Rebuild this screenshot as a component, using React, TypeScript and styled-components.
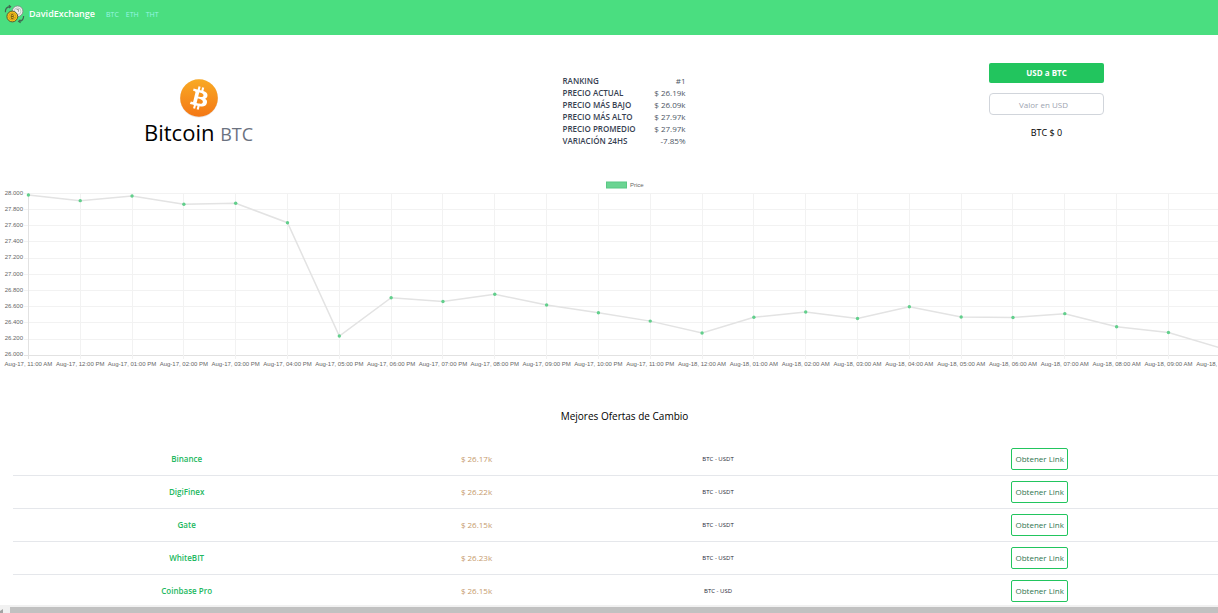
import React, { useState } from "react";
import styled, { createGlobalStyle } from "styled-components";

const GlobalStyle = createGlobalStyle`
  * { box-sizing: border-box; }
  body {
    margin: 0;
    background: #fff;
    color: #000;
    font-family: "Open Sans", "Noto Sans", sans-serif;
    font-size: 8px;
    line-height: 12px;
  }
`;

const Page = styled.div`
  display: flex;
  flex-direction: column;
  height: 100vh;
  overflow: hidden;
`;

const Viewport = styled.div`
  flex: 1;
  min-height: 0;
  overflow: hidden;
`;

const Content = styled.main`
  width: calc(100% + 30px);
`;

const Header = styled.header`
  display: flex;
  align-items: flex-start;
  height: 35px;
  padding: 3px 4px;
  background: #4ade80;
`;

const Brand = styled.a`
  display: flex;
  align-items: center;
  gap: 4px;
  height: 22px;
  color: #fff;
  font-size: 9px;
  font-weight: 600;
  text-decoration: none;
`;

const Nav = styled.nav`
  display: flex;
  align-items: center;
  gap: 7px;
  height: 24px;
  margin-left: 11px;
`;

const NavLink = styled.a`
  color: #99f6e4;
  font-size: 7px;
  text-decoration: none;
`;

const Summary = styled.section`
  display: grid;
  grid-template-columns: 1fr auto 1fr;
  align-items: start;
  height: 143px;
  padding: 28px 144px 0;
`;

const Coin = styled.div`
  display: flex;
  flex-direction: column;
  align-items: center;
  justify-self: start;
  padding-top: 15px;
`;

const CoinName = styled.h1`
  margin: 0;
  font-size: 22px;
  line-height: 28px;
  font-weight: 400;
  white-space: nowrap;
`;

const Symbol = styled.span`
  color: #6b7280;
  font-size: 18px;
`;

const Stats = styled.table`
  margin-top: 12px;
  border-collapse: collapse;
  width: 123px;
  color: #374151;
  font-size: 8px;
  white-space: nowrap;

  th, td { padding: 0; line-height: 12px; }
  th { text-align: left; font-weight: 600; }
  td { text-align: right; color: #4b5563; }
`;

const Converter = styled.form`
  display: flex;
  flex-direction: column;
  align-items: center;
  justify-self: end;
  width: 115px;
`;

const ModeButton = styled.button`
  width: 100%;
  height: 20px;
  padding: 0;
  border: 0;
  border-radius: 2px;
  background: #22c55e;
  color: #fff;
  font: 700 8px/12px "Open Sans", sans-serif;
`;

const AmountInput = styled.input`
  width: 100%;
  height: 22px;
  margin: 10px 0;
  padding: 0 12px 0 6px;
  border: 1px solid #d1d5db;
  border-radius: 4px;
  background: #fff;
  font: 400 8px/12px "Open Sans", sans-serif;
  text-align: center;

  &::placeholder { color: #9ca3af; opacity: 1; }
`;

const Result = styled.output`
  font-size: 9px;
  line-height: 16px;
`;

const Chart = styled.svg`
  display: block;
  width: 100%;
  font-family: "Liberation Sans", Arial, sans-serif;
  font-size: 6px;
  fill: #666;
`;

const Offers = styled.section`
  padding: 37px 12px 0 13px;
`;

const OffersTitle = styled.h2`
  margin: 0 0 20px;
  font-size: 10px;
  line-height: 14px;
  font-weight: 400;
  text-align: center;
`;

const OffersTable = styled.table`
  width: 100%;
  border-collapse: separate;
  border-spacing: 0;
  table-layout: fixed;
  text-align: center;
`;

const OfferRow = styled.tr`
  height: 33px;
`;

const Cell = styled.td<{ $tone: "name" | "price" | "pair" | "action" }>`
  padding: 0;
  border-bottom: 1px solid #e5e7eb;
  font-size: ${(p) => (p.$tone === "pair" ? "6px" : "8px")};
  font-weight: ${(p) => (p.$tone === "name" ? 600 : 400)};
  color: ${(p) => ({ name: "#22b860", price: "#c69a6d", pair: "#1f2937", action: "#15803d" })[p.$tone]};
`;

const LinkButton = styled.button`
  display: block;
  width: 57px;
  height: 22px;
  margin: 0 auto;
  padding: 0;
  border: 1px solid #22c55e;
  border-radius: 2px;
  background: #fff;
  color: #2f7550;
  font: 400 8px/12px "Open Sans", sans-serif;
  white-space: nowrap;
`;

const ScrollTrack = styled.div`
  flex: none;
  display: flex;
  height: 8px;
  padding-top: 2px;
  background: #f1f1f1;
`;

const ScrollArrow = styled.svg`
  width: 10px;
  height: 6px;
`;

const ScrollThumb = styled.div`
  flex: 1;
  background: #c1c1c1;
`;

const stats = [
  ["RANKING", "#1"],
  ["PRECIO ACTUAL", "$ 26.19k"],
  ["PRECIO MÁS BAJO", "$ 26.09k"],
  ["PRECIO MÁS ALTO", "$ 27.97k"],
  ["PRECIO PROMEDIO", "$ 27.97k"],
  ["VARIACIÓN 24HS", "-7.85%"],
];

const offers = [
  ["Binance", "$ 26.17k", "BTC - USDT"],
  ["DigiFinex", "$ 26.22k", "BTC - USDT"],
  ["Gate", "$ 26.15k", "BTC - USDT"],
  ["WhiteBIT", "$ 26.23k", "BTC - USDT"],
  ["Coinbase Pro", "$ 26.15k", "BTC - USD"],
];

const prices = [
  27979, 27909, 27967, 27864, 27877, 27637, 26238, 26711, 26664, 26753, 26621, 26526,
  26422, 26275, 26469, 26534, 26454, 26600, 26472, 26467, 26514, 26353, 26281, 26090,
];

const hourLabel = (i: number) => {
  const hour = (11 + i) % 24;
  const twelve = String(hour % 12 || 12).padStart(2, "0");
  return `Aug-${i < 13 ? 17 : 18}, ${twelve}:00 ${hour < 12 ? "AM" : "PM"}`;
};

const xOf = (i: number) => 28.4 + i * 51.82;
const yOf = (price: number) => 15.3 + (28000 - price) * 0.081;

function PriceChart() {
  const right = xOf(prices.length - 1);
  return (
    <Chart viewBox="0 0 1248 194" role="img" aria-label="Price">
      <rect x="606.5" y="4" width="20" height="6" fill="#6bd492" stroke="#59c884" strokeWidth="1" />
      <text x="630" y="9">Price</text>
      {Array.from({ length: 11 }, (_, i) => {
        const y = Math.floor(15.3 + i * 16.2) + 0.5;
        return (
          <g key={i}>
            <line x1="24" x2={right} y1={y} y2={y} stroke={i === 10 ? "#e2e2e2" : "#f2f2f2"} />
            <text x="23" y={Math.round(15 + i * 16.1) + 2} textAnchor="end">
              {((28000 - i * 200) / 1000).toFixed(3)}
            </text>
          </g>
        );
      })}
      {prices.map((_, i) => {
        const x = Math.floor(xOf(i)) + 0.5;
        return (
          <g key={i}>
            <line x1={x} x2={x} y1="15" y2="181" stroke={i === 0 ? "#e2e2e2" : "#f2f2f2"} />
            <text x={xOf(i)} y="188" textAnchor="middle">{hourLabel(i)}</text>
          </g>
        );
      })}
      <polyline
        points={prices.map((p, i) => `${xOf(i)},${yOf(p)}`).join(" ")}
        fill="none"
        stroke="#e3e3e3"
        strokeWidth="1.5"
      />
      {prices.map((p, i) => (
        <circle key={i} cx={xOf(i)} cy={yOf(p)} r="1.7" fill="#62cf8c" />
      ))}
    </Chart>
  );
}

function ExchangeLogo() {
  return (
    <svg width="21" height="20" viewBox="0 0 21 20" aria-hidden="true">
      <circle cx="13.6" cy="7.2" r="5.3" fill="#f1f1f1" stroke="#7d8581" strokeWidth=".8" />
      <circle cx="13.6" cy="7.2" r="3.3" fill="none" stroke="#c5c8c6" />
      <path d="M12.6 5.4h1.8v2.4" fill="none" stroke="#999" />
      <circle cx="8.3" cy="12.5" r="5.4" fill="#f7c718" stroke="#555b35" />
      <circle cx="8.3" cy="12.5" r="3.5" fill="none" stroke="#d89b18" />
      <path d="M7.2 10.7h2l.5.9-.5.9H7.3h2l.6 1-.6.9H7.2zM8.3 9.8v.8m0 3.8v.9" fill="none" stroke="#695317" strokeWidth=".8" />
      <path d="M1.4 8.2C1.2 5 3.2 2.9 6 2.6M4.8 1.1l1.8 1.4-1.4 1.7M19.6 12c.1 3.1-1.7 5-4.6 5.5m1.4-1.8-1.8 1.8 2 1.2" fill="none" stroke="#426650" strokeWidth="1.2" />
    </svg>
  );
}

function BitcoinLogo() {
  return (
    <svg width="40" height="40" viewBox="0 0 40 40" aria-hidden="true">
      <defs>
        <linearGradient id="coin" x1="0" y1="0" x2="0" y2="1">
          <stop offset="0" stopColor="#f9aa24" />
          <stop offset="1" stopColor="#f47715" />
        </linearGradient>
      </defs>
      <circle cx="20" cy="20.6" r="19" fill="#e9e3df" />
      <circle cx="20" cy="20" r="18.8" fill="url(#coin)" />
      <g transform="translate(1.2 1.2) scale(1.175)">
        <path
          fill="#fff"
          d="M23.19 14.02c.31-2.1-1.28-3.22-3.46-3.98l.71-2.83-1.73-.43-.69 2.76c-.45-.12-.92-.22-1.38-.33l.69-2.78-1.72-.43-.71 2.84c-.37-.09-.74-.17-1.1-.26l-2.37-.59-.46 1.84s1.28.3 1.25.32c.7.17.82.64.8 1.01l-.8 3.23c.05.01.11.03.18.06l-.18-.05-1.13 4.53c-.09.21-.3.53-.79.41.02.03-1.25-.31-1.25-.31l-.86 1.98 2.24.56c.42.1.83.21 1.23.31l-.71 2.87 1.72.43.71-2.84c.47.13.93.25 1.37.36l-.7 2.82 1.72.43.72-2.86c2.94.55 5.16.33 6.09-2.33.75-2.14-.04-3.38-1.58-4.18 1.13-.26 1.97-1 2.2-2.56zm-3.94 5.54c-.53 2.14-4.13.98-5.3.69l.95-3.79c1.16.29 4.9.87 4.35 3.1zm.53-5.57c-.48 1.95-3.48.96-4.45.72l.86-3.44c.97.24 4.09.69 3.59 2.72z"
        />
      </g>
    </svg>
  );
}

export default function App() {
  const [amount, setAmount] = useState("");
  const [toCoin, setToCoin] = useState(true);
  const value = Number(amount) || 0;
  return (
    <Page>
      <GlobalStyle />
      <Viewport>
        <Header>
          <Brand href="#">
            <ExchangeLogo />
            DavidExchange
          </Brand>
          <Nav>
            {["BTC", "ETH", "THT"].map((coin) => (
              <NavLink key={coin} href={`#${coin}`}>{coin}</NavLink>
            ))}
          </Nav>
        </Header>
        <Content>
          <Summary>
            <Coin>
              <BitcoinLogo />
              <CoinName>Bitcoin <Symbol>BTC</Symbol></CoinName>
            </Coin>
            <Stats>
              <tbody>
                {stats.map(([label, figure]) => (
                  <tr key={label}>
                    <th scope="row">{label}</th>
                    <td>{figure}</td>
                  </tr>
                ))}
              </tbody>
            </Stats>
            <Converter>
              <ModeButton type="button" onClick={() => setToCoin(!toCoin)}>
                {toCoin ? "USD a BTC" : "BTC a USD"}
              </ModeButton>
              <AmountInput
                aria-label="Valor"
                placeholder={toCoin ? "Valor en USD" : "Valor en BTC"}
                value={amount}
                onChange={(e) => setAmount(e.target.value)}
              />
              <Result>
                {toCoin ? `BTC $ ${value / 26190}` : `USD $ ${value * 26190}`}
              </Result>
            </Converter>
          </Summary>
          <PriceChart />
          <Offers>
            <OffersTitle>Mejores Ofertas de Cambio</OffersTitle>
            <OffersTable>
              <colgroup>
                <col width="28.4%" />
                <col width="19%" />
                <col width="20.5%" />
                <col width="32.1%" />
              </colgroup>
              <tbody>
                {offers.map(([name, price, pair]) => (
                  <OfferRow key={name}>
                    <Cell $tone="name">{name}</Cell>
                    <Cell $tone="price">{price}</Cell>
                    <Cell $tone="pair">{pair}</Cell>
                    <Cell $tone="action">
                      <LinkButton type="button">Obtener Link</LinkButton>
                    </Cell>
                  </OfferRow>
                ))}
              </tbody>
            </OffersTable>
          </Offers>
        </Content>
      </Viewport>
      <ScrollTrack>
        <ScrollArrow viewBox="0 0 10 6" aria-hidden="true">
          <path d="M0 4l3-2v4H0z" fill="#a3a3a3" />
        </ScrollArrow>
        <ScrollThumb />
      </ScrollTrack>
    </Page>
  );
}
